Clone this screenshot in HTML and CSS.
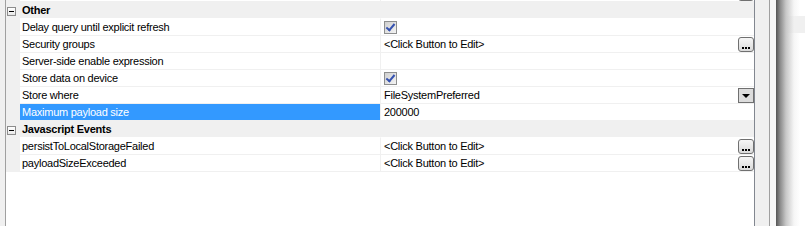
FILE: index.html
```html
<!DOCTYPE html>
<html lang="en">
<head>
    <meta charset="UTF-8">
    <title>Properties</title>
    <link rel="stylesheet" href="styles.css">
</head>
<body>
    <div class="window">
        <div class="grid">
            <div class="rows">
                <!-- row scrolled out above, only its button edge shows -->
                <div class="row">
                    <div class="margin"></div>
                    <div class="label"></div>
                    <div class="value"><span class="text"></span><span class="btn-edit"><i></i><i></i><i></i></span></div>
                </div>

                <div class="row category">
                    <div class="margin"><span class="toggle"></span></div>
                    <div class="label">Other</div>
                    <div class="value"></div>
                </div>
                <div class="row">
                    <div class="margin"></div>
                    <div class="label">Delay query until explicit refresh</div>
                    <div class="value"><span class="check"></span></div>
                </div>
                <div class="row">
                    <div class="margin"></div>
                    <div class="label">Security groups</div>
                    <div class="value"><span class="text">&lt;Click Button to Edit&gt;</span><span class="btn-edit"><i></i><i></i><i></i></span></div>
                </div>
                <div class="row">
                    <div class="margin"></div>
                    <div class="label">Server-side enable expression</div>
                    <div class="value"></div>
                </div>
                <div class="row">
                    <div class="margin"></div>
                    <div class="label">Store data on device</div>
                    <div class="value"><span class="check"></span></div>
                </div>
                <div class="row">
                    <div class="margin"></div>
                    <div class="label">Store where</div>
                    <div class="value"><span class="text">FileSystemPreferred</span><span class="btn-drop"></span></div>
                </div>
                <div class="row selected">
                    <div class="margin"></div>
                    <div class="label">Maximum payload size</div>
                    <div class="value"><span class="text">200000</span></div>
                </div>

                <div class="row category">
                    <div class="margin"><span class="toggle"></span></div>
                    <div class="label">Javascript Events</div>
                    <div class="value"></div>
                </div>
                <div class="row">
                    <div class="margin"></div>
                    <div class="label">persistToLocalStorageFailed</div>
                    <div class="value"><span class="text">&lt;Click Button to Edit&gt;</span><span class="btn-edit"><i></i><i></i><i></i></span></div>
                </div>
                <div class="row">
                    <div class="margin"></div>
                    <div class="label">payloadSizeExceeded</div>
                    <div class="value"><span class="text">&lt;Click Button to Edit&gt;</span><span class="btn-edit"><i></i><i></i><i></i></span></div>
                </div>
            </div>
        </div>
        <div class="gutter"></div>
        <div class="strip"></div>
        <div class="shadow"></div>
    </div>
</body>
</html>
```

FILE: styles.css
```css
body {
    margin: 0;
    background-color: #f0f0f0;
    font-family: "Liberation Sans", Arial, sans-serif;
    font-size: 11px;
    color: #000;
}

.window {
    display: flex;
    height: 226px;
    padding-left: 5px;
    overflow: hidden;
}

.grid {
    width: 748px;
    border-left: 1px solid #a0a0a0;
    border-right: 1px solid #828790;
    background-color: #fff;
    overflow: hidden;
}
.rows {
    margin-top: -15px;
}
.row {
    display: grid;
    grid-template-columns: 14px 360px 1fr;
    height: 17px;
}
.margin {
    background-color: #f0f0f0;
}
.label {
    padding: 1px 0 0 2px;
    line-height: 15px;
    border-bottom: 1px solid #f0f0f0;
    white-space: nowrap;
    letter-spacing: -0.25px;
}
.value {
    display: flex;
    justify-content: space-between;
    align-items: flex-start;
    padding-left: 3px;
    border-left: 1px solid #f0f0f0;
    border-bottom: 1px solid #f0f0f0;
    letter-spacing: -0.25px;
    white-space: nowrap;
}
.value .text {
    padding-top: 1px;
    line-height: 15px;
}

.category .label,
.category .value {
    background-color: #f0f0f0;
    border-bottom-color: #fff;
    font-weight: bold;
}
.toggle {
    display: block;
    width: 7px;
    height: 7px;
    margin: 5px 0 0 1px;
    border: 1px solid #8c8c8c;
    background: linear-gradient(#fff, #e8e8e8);
    position: relative;
}
.toggle::after {
    content: "";
    position: absolute;
    left: 1px;
    top: 3px;
    width: 5px;
    height: 1px;
    background-color: #000;
}

.selected .label {
    background-color: #3399ff;
    color: #fff;
}

.check {
    display: block;
    width: 11px;
    height: 11px;
    margin-top: 2px;
    border: 1px solid #8e8f8f;
    background: linear-gradient(135deg, #cfcfcf, #f4f4f4);
    position: relative;
}
.check::after {
    content: "";
    position: absolute;
    left: 3px;
    top: 0;
    width: 3px;
    height: 7px;
    border: solid #3552b0;
    border-width: 0 2px 2px 0;
    transform: rotate(40deg);
}

.btn-edit {
    display: flex;
    align-items: flex-end;
    justify-content: center;
    gap: 1px;
    box-sizing: border-box;
    width: 16px;
    height: 15px;
    margin-top: 1px;
    padding-bottom: 2px;
    border: 1px solid #707070;
    border-radius: 3px;
    background: linear-gradient(#f6f6f6, #dadada);
}
.btn-edit i {
    display: block;
    width: 2px;
    height: 2px;
    background-color: #000;
}

.btn-drop {
    display: block;
    box-sizing: border-box;
    width: 16px;
    height: 15px;
    margin-top: 1px;
    border: 1px solid #707070;
    background-color: #dcdcdc;
    position: relative;
}
.btn-drop::after {
    content: "";
    position: absolute;
    left: 3px;
    top: 5px;
    border-left: 4px solid transparent;
    border-right: 4px solid transparent;
    border-top: 4px solid #000;
}

.gutter {
    width: 14px;
    background-color: #f0f0f0;
    border-right: 1px solid #a0a0a0;
}
.strip {
    width: 6px;
    background-color: #f7f7f7;
}
.shadow {
    flex: 1;
    background:
        linear-gradient(to right, #555 0, #8a8a8a 4px, #c8c8c8 10px, rgba(240,240,240,0.6) 18px, rgba(255,255,255,0) 24px),
        linear-gradient(#fff 16px, #f0f0f0 16px, #f0f0f0 33px, #fff 33px);
}
```
